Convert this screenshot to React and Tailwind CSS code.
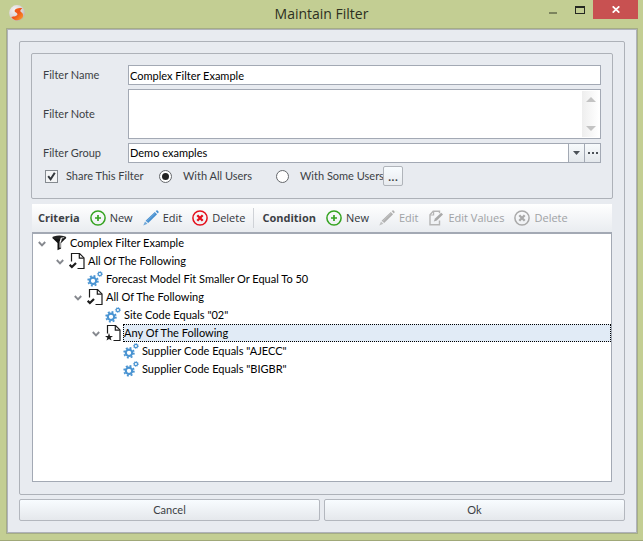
import { useId } from "react";
import clsx from "clsx";

const UI = "font-['Lato',sans-serif] text-[11px] leading-4";

function LogoIcon() {
  return (
    <svg viewBox="0 0 16 16" className="size-4" aria-hidden="true">
      <defs>
        <radialGradient id="ball" cx="0.35" cy="0.3" r="0.8">
          <stop offset="0" stopColor="#f4f2f2" />
          <stop offset="0.6" stopColor="#d9d3d6" />
          <stop offset="1" stopColor="#b9a9a6" />
        </radialGradient>
        <linearGradient id="swirl" x1="0" y1="0" x2="1" y2="1">
          <stop offset="0" stopColor="#f0661c" />
          <stop offset="0.5" stopColor="#f0551a" />
          <stop offset="1" stopColor="#fba52a" />
        </linearGradient>
      </defs>
      <circle cx="8" cy="8" r="7.9" fill="url(#ball)" />
      <path
        d="M13.4 3.2C10 2.6 6 3.2 5.6 5.8 5.4 7.6 9 7.6 8.4 9.6 7.9 11.4 5 11.6 2.2 11.9 4.6 15.6 9.5 16.4 12.6 13.6 14.8 11.6 14.4 8.6 12.6 7.6 11.2 6.6 10.4 5.4 13.4 3.2Z"
        fill="url(#swirl)"
      />
    </svg>
  );
}

function PlusCircle() {
  return (
    <svg viewBox="0 0 16 16" className="size-4" fill="none" stroke="#35a321" aria-hidden="true">
      <circle cx="8" cy="8" r="7.1" strokeWidth="1.5" />
      <path d="M8 5v6M5 8h6" strokeWidth="1.7" />
    </svg>
  );
}

function CrossCircle({ muted }) {
  return (
    <svg viewBox="0 0 16 16" className="size-4" fill="none" stroke={muted ? "#a9a9a9" : "#e3101c"} aria-hidden="true">
      <circle cx="8" cy="8" r="7.1" strokeWidth="1.5" />
      <path d="M5.3 5.3l5.4 5.4M10.7 5.3l-5.4 5.4" strokeWidth="2.3" />
    </svg>
  );
}

function Pencil({ muted }) {
  return (
    <svg viewBox="0 0 16 16" className="size-4" fill={muted ? "#b0b0b0" : "#458fd0"} aria-hidden="true">
      <path d="M12.6 1.1 13.6.4Q14.4.1 15.1.9T15.6 2.5L14.8 3.4Z" />
      <path d="M11.8 1.9 14.1 4.2 5.2 13 2.6 10.7Z" />
      <path d="M2 11.5 4.4 13.8.3 15.5Z" fillOpacity="0.75" />
      <path d="M3.6 11.6 12.4 3" stroke="#fff" strokeOpacity="0.35" strokeWidth="0.7" />
    </svg>
  );
}

function EditPage() {
  return (
    <svg viewBox="0 0 16 16" className="size-4" fill="none" stroke="#b5b5b5" aria-hidden="true">
      <path d="M11.5 10.5v4.2H2V4.8L5.2 1.3h6.3v2" strokeWidth="1.4" />
      <path d="M2 5h3.6V1.3" strokeWidth="1.2" />
      <path d="M5.8 11.4 7 8.6 13.2 2.8 15 4.6 8.8 10.6Z" fill="#a9a9a9" stroke="none" />
    </svg>
  );
}

function Funnel() {
  return (
    <svg viewBox="0 0 16 16" className="size-4" aria-hidden="true">
      <path d="M1.4 3 6.5 8v7.2l3.6-1.8V8l5.1-5Z" fill="#111" />
      <ellipse cx="8.3" cy="2.5" rx="7" ry="1.9" fill="#222" />
      <path d="M9.8 2.8 13.4 2.2 9.6 7.2v5.6h-1V6.8Z" fill="#fff" />
      <path d="M10.8 3.4 13.2 3 10.4 6.4Z" fill="#111" />
    </svg>
  );
}

function Page({ star }) {
  return (
    <svg viewBox="0 0 16 16" className="size-4" fill="none" stroke="#1c1c1c" aria-hidden="true">
      <path d="M2.5 8.5v-8h8l4.5 4.4v10.6H8.5" strokeWidth="1.2" />
      <path d="M10.3.8v4.4h4.5" strokeWidth="1.2" />
      {star ? (
        <path d="M4 8 5 10.9H8L5.6 12.7 6.5 15.6 4 13.9 1.5 15.6 2.4 12.7 0 10.9H3Z" fill="#1c1c1c" stroke="none" />
      ) : (
        <path d="M.7 11.8 2.9 14 7 10" strokeWidth="2.2" />
      )}
    </svg>
  );
}

function Gears() {
  return (
    <svg viewBox="0 0 16 16" className="size-4" fill="none" stroke="#4a94d2" aria-hidden="true">
      <circle cx="6" cy="9.8" r="3.2" strokeWidth="2.1" />
      <circle cx="6" cy="9.8" r="4.9" strokeWidth="1.7" strokeDasharray="1.95 1.9" />
      <circle cx="12.9" cy="3" r="1.7" strokeWidth="1.2" />
      <circle cx="12.9" cy="3" r="2.5" strokeWidth="0.8" strokeDasharray="1 0.96" />
    </svg>
  );
}

function Chevron() {
  return (
    <svg viewBox="0 0 8 6" className="h-[6px] w-2" fill="none" stroke="#85888e" strokeWidth="1.9" aria-hidden="true">
      <path d="M.8 1 4 4.3 7.2 1" />
    </svg>
  );
}

const tree = [
  { level: 0, kind: "filter", text: "Complex Filter Example" },
  { level: 1, kind: "all", text: "All Of The Following" },
  { level: 2, kind: "condition", text: "Forecast Model Fit Smaller Or Equal To 50" },
  { level: 2, kind: "all", text: "All Of The Following" },
  { level: 3, kind: "condition", text: 'Site Code Equals "02"' },
  { level: 3, kind: "any", text: "Any Of The Following", selected: true },
  { level: 4, kind: "condition", text: 'Supplier Code Equals "AJECC"' },
  { level: 4, kind: "condition", text: 'Supplier Code Equals "BIGBR"' },
];

const indents = ["pl-0", "pl-[18px]", "pl-9", "pl-[54px]", "pl-[72px]"];

const nodeIcons = {
  filter: <Funnel />,
  all: <Page />,
  any: <Page star />,
  condition: <Gears />,
};

function TreeRow({ node }) {
  return (
    <li role="treeitem" aria-level={node.level + 1} aria-selected={!!node.selected} className={clsx("flex h-[18px] items-center", indents[node.level])}>
      <span className="flex w-[18px] shrink-0 justify-center pt-[2px]">
        {node.kind !== "condition" && (
          <button type="button" aria-label={`Collapse ${node.text}`}>
            <Chevron />
          </button>
        )}
      </span>
      <span className="w-[18px] shrink-0">{nodeIcons[node.kind]}</span>
      <span
        className={clsx(
          "flex h-[18px] items-center whitespace-nowrap border border-dotted",
          node.selected ? "grow border-black bg-[#e1ebf6]" : "border-transparent"
        )}
      >
        {node.text}
      </span>
    </li>
  );
}

function ToolButton({ icon, children, disabled }) {
  return (
    <button type="button" disabled={disabled} className="flex shrink-0 items-center gap-1 whitespace-nowrap text-[#33363c] disabled:text-[#a0a2a5]">
      {icon}
      {children}
    </button>
  );
}

function Choice({ type, name, label, checked, className }) {
  const id = useId();
  return (
    <span className={clsx("flex items-center", className)}>
      <span className="grid shrink-0 place-items-center">
        <input
          id={id}
          type={type}
          name={name}
          defaultChecked={checked}
          className={clsx(
            "peer col-start-1 row-start-1 size-[13px] appearance-none border",
            type === "radio" ? "rounded-full border-[#65686c] bg-white" : "border-[#858a90] bg-[#f4f5f6]"
          )}
        />
        {type === "radio" ? (
          <span className="pointer-events-none invisible col-start-1 row-start-1 size-[7px] rounded-full bg-[#222] peer-checked:visible" />
        ) : (
          <svg viewBox="0 0 13 13" className="pointer-events-none invisible col-start-1 row-start-1 size-[13px] peer-checked:visible" fill="none" stroke="#33373c" strokeWidth="2" aria-hidden="true">
            <path d="M3.2 6.2 5.6 9.3 9.8 2.8" />
          </svg>
        )}
      </span>
      <label htmlFor={id} className="whitespace-nowrap">
        {label}
      </label>
    </span>
  );
}

const field = "border border-[#a3a9b4] bg-white text-black outline-none";

export default function App() {
  return (
    <div className={clsx("flex min-h-screen flex-col border-b border-[#a0a878] bg-[#c3ce93] text-[#3c3f45]", UI)}>
      <header className="grid h-7 grid-cols-[1fr_auto_1fr] items-start">
        <div className="pt-[5px] pl-[9px]">
          <LogoIcon />
        </div>
        <h1 className="font-['Open_Sans',sans-serif] text-sm leading-7 text-[#2d3021]">Maintain Filter</h1>
        <div className="flex justify-end pr-[5px]">
          <button type="button" aria-label="Minimize" className="grid h-[19px] w-[26px] place-items-center">
            <svg viewBox="0 0 8 10" className="h-[10px] w-2" aria-hidden="true">
              <path d="M0 7h8v2H0z" fill="#7c845e" />
            </svg>
          </button>
          <button type="button" aria-label="Maximize" className="grid h-[19px] w-[27px] place-items-center">
            <svg viewBox="0 0 10 8" className="h-2 w-[10px]" aria-hidden="true">
              <path d="M0 0h10v8H0zM1 2v5h8V2z" fillRule="evenodd" fill="#252822" />
            </svg>
          </button>
          <button type="button" aria-label="Close" className="grid h-[19px] w-[45px] place-items-center bg-[#c85151]">
            <svg viewBox="0 0 8 7" className="h-[7px] w-2" stroke="#fff" strokeWidth="1.7" aria-hidden="true">
              <path d="M.7.3 7.3 6.7M7.3.3.7 6.7" />
            </svg>
          </button>
        </div>
      </header>

      <main className="mr-[5px] mb-[6px] ml-[6px] flex grow flex-col border border-[#a5ad85]">
        <form className="flex grow flex-col gap-1 border border-[#afb2ba] bg-[#e8ebf0] p-[11px]" onSubmit={(e) => e.preventDefault()}>
          <div className="flex grow flex-col rounded-xs border border-[#adb1b8] px-[11px] pt-[11px] pb-3">
            <section className="flex flex-col gap-[3px] rounded-xs border border-[#adb1b8] px-[11px] pt-[11px] pb-3">
              <div className="grid grid-cols-[85px_1fr] items-center gap-y-1">
                <label htmlFor="name">Filter Name</label>
                <input id="name" defaultValue="Complex Filter Example" className={clsx(field, "h-5 w-full px-[1px]")} />
                <label htmlFor="note">Filter Note</label>
                <div className={clsx(field, "flex h-[50px] py-[1px] pr-[1px]")}>
                  <textarea id="note" className="min-w-0 grow resize-none outline-none" />
                  <div className="flex w-[17px] flex-col items-center justify-between bg-linear-to-r from-[#eeeeee] to-white py-[6px]">
                    <button type="button" aria-label="Scroll up">
                      <svg viewBox="0 0 10 5" className="h-[5px] w-[10px]" aria-hidden="true">
                        <path d="M5 0 10 5H0z" fill="#c3c3c3" />
                      </svg>
                    </button>
                    <button type="button" aria-label="Scroll down">
                      <svg viewBox="0 0 10 5" className="h-[5px] w-[10px]" aria-hidden="true">
                        <path d="M0 0h10L5 5z" fill="#c3c3c3" />
                      </svg>
                    </button>
                  </div>
                </div>
                <label htmlFor="group">Filter Group</label>
                <div className={clsx(field, "flex h-5")}>
                  <div className="grid grow grid-cols-[1fr_16px]">
                    <select id="group" className="col-span-2 col-start-1 row-start-1 appearance-none px-[1px] outline-none">
                      <option>Demo examples</option>
                    </select>
                    <span className="pointer-events-none col-start-2 row-start-1 grid place-items-center border-l border-[#a3a9b4] bg-linear-to-b from-[#f7fafc] to-[#e4e8ec]">
                      <svg viewBox="0 0 7 4" className="h-1 w-[7px]" aria-hidden="true">
                        <path d="M0 0h7L3.5 4z" fill="#4c5258" />
                      </svg>
                    </span>
                  </div>
                  <button type="button" aria-label="Manage groups" className="grid w-4 place-items-center border-l border-[#a3a9b4] bg-linear-to-b from-[#f7fafc] to-[#e4e8ec]">
                    <svg viewBox="0 0 10 2" className="h-[2px] w-[10px]" aria-hidden="true">
                      <path d="M0 0h2v2H0zM4 0h2v2H4zM8 0h2v2H8z" fill="#4c5258" />
                    </svg>
                  </button>
                </div>
              </div>
              <div className="flex h-5 items-center pl-[2px]">
                <Choice type="checkbox" label="Share This Filter" checked className="w-[114px] gap-2" />
                <Choice type="radio" name="share" label="With All Users" checked className="w-[117px] gap-[11px]" />
                <Choice type="radio" name="share" label="With Some Users" className="w-[107px] gap-[11px]" />
                <button type="button" aria-label="Choose users" className="grid size-5 shrink-0 place-items-center rounded-xs border border-[#b0b4ba] bg-linear-to-b from-[#f8fcff] to-[#e8ebef] text-sm leading-none">
                  ...
                </button>
              </div>
            </section>

            <section className="mt-[5px] flex grow flex-col">
              <div role="toolbar" className="mx-[1px] flex h-7 items-center gap-[10px] overflow-hidden bg-linear-to-b from-white to-[#e9ecf0] px-[6px] font-['Open_Sans',sans-serif]">
                <b>Criteria</b>
                <ToolButton icon={<PlusCircle />}>New</ToolButton>
                <ToolButton icon={<Pencil />}>Edit</ToolButton>
                <ToolButton icon={<CrossCircle />}>Delete</ToolButton>
                <span className="-mx-[2px] h-5 w-px shrink-0 bg-[#cfd2d7]" />
                <b>Condition</b>
                <ToolButton icon={<PlusCircle />}>New</ToolButton>
                <ToolButton disabled icon={<Pencil muted />}>Edit</ToolButton>
                <ToolButton disabled icon={<EditPage />}>Edit Values</ToolButton>
                <ToolButton disabled icon={<CrossCircle muted />}>Delete</ToolButton>
              </div>
              <ul role="tree" className="mx-[1px] grow border border-t-2 border-[#a3a9b4] bg-white text-black">
                {tree.map((node, i) => (
                  <TreeRow key={i} node={node} />
                ))}
              </ul>
            </section>
          </div>

          <div className="grid grid-cols-2 gap-1">
            {["Cancel", "Ok"].map((text) => (
              <button key={text} type="button" className="h-[22px] rounded-xs border border-[#b3b7be] bg-linear-to-b from-[#f8fcff] to-[#e5e8ec]">
                {text}
              </button>
            ))}
          </div>
        </form>
      </main>
    </div>
  );
}
